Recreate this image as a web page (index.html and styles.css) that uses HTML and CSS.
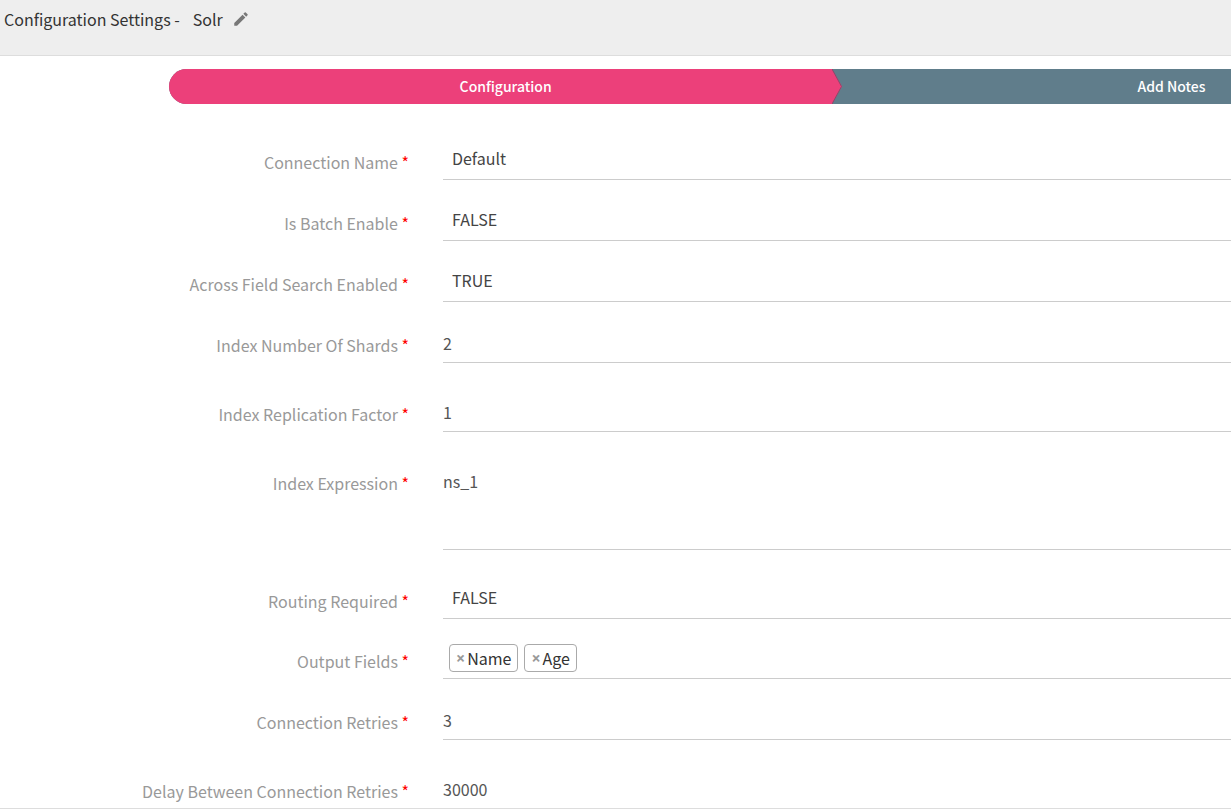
FILE: index.html
```html
<!DOCTYPE html>
<html lang="en">
<head>
<meta charset="utf-8">
<meta name="viewport" content="width=device-width, initial-scale=1">
<title>Configuration Settings - Solr</title>
<link rel="stylesheet" href="styles.css">
</head>
<body>
<header class="page-header">
  <h1 class="page-title">Configuration Settings -</h1>
  <span class="page-name">Solr</span>
  <button class="edit-button" type="button" aria-label="Edit name">
    <svg width="18" height="18" viewBox="0 0 24 24" fill="currentColor"><path d="M3 17.25V21h3.75L17.81 9.94l-3.75-3.75L3 17.25zM20.71 7.04a1 1 0 0 0 0-1.41l-2.34-2.34a1 1 0 0 0-1.41 0l-1.83 1.83 3.75 3.75 1.83-1.83z"/></svg>
  </button>
</header>
<main class="content">
  <nav class="steps" aria-label="Steps">
    <a class="step step-active" href="#configuration">Configuration
      <svg class="step-arrow" width="10" height="35" viewBox="0 0 10 35"><path d="M0 0L10 17.500L0 35H10V0z" fill="#607d8b"/><path d="M0 0L9.500 17.500L0 35" fill="none" stroke="#8a4a6b"/></svg>
    </a>
    <a class="step step-next" href="#notes">Add Notes</a>
  </nav>
  <form class="form" id="configuration">
    <div class="row">
      <label class="label" for="connection">Connection Name <span class="required">*</span></label>
      <select class="field select" id="connection"><option>Default</option></select>
    </div>
    <div class="row">
      <label class="label" for="batch">Is Batch Enable <span class="required">*</span></label>
      <select class="field select" id="batch"><option>FALSE</option><option>TRUE</option></select>
    </div>
    <div class="row">
      <label class="label" for="across">Across Field Search Enabled <span class="required">*</span></label>
      <select class="field select" id="across"><option>TRUE</option><option>FALSE</option></select>
    </div>
    <div class="row">
      <label class="label" for="shards">Index Number Of Shards <span class="required">*</span></label>
      <input class="field input" id="shards" type="text" value="2">
    </div>
    <div class="row row-spaced">
      <label class="label" for="replication">Index Replication Factor <span class="required">*</span></label>
      <input class="field input" id="replication" type="text" value="1">
    </div>
    <div class="row row-spaced">
      <label class="label" for="expression">Index Expression <span class="required">*</span></label>
      <textarea class="field textarea" id="expression">ns_1</textarea>
    </div>
    <div class="row row-spaced">
      <label class="label" for="routing">Routing Required <span class="required">*</span></label>
      <select class="field select" id="routing"><option>FALSE</option><option>TRUE</option></select>
    </div>
    <div class="row row-tight">
      <span class="label" id="output-label">Output Fields <span class="required">*</span></span>
      <div class="field tags" role="group" aria-labelledby="output-label">
        <span class="tag"><button class="tag-remove" type="button" aria-label="Remove Name">×</button>Name</span>
        <span class="tag"><button class="tag-remove" type="button" aria-label="Remove Age">×</button>Age</span>
      </div>
    </div>
    <div class="row">
      <label class="label" for="retries">Connection Retries <span class="required">*</span></label>
      <input class="field input" id="retries" type="text" value="3">
    </div>
    <div class="row row-spaced">
      <label class="label" for="delay">Delay Between Connection Retries <span class="required">*</span></label>
      <input class="field input" id="delay" type="text" value="30000">
    </div>
  </form>
</main>
<footer class="page-footer"></footer>
</body>
</html>
```
FILE: styles.css
```css
* {
  box-sizing: border-box;
}

body {
  display: flex;
  flex-direction: column;
  height: 100vh;
  margin: 0;
  background: #fff;
  color: #444;
  font: 16px/24px "Noto Sans CJK SC", "Open Sans", sans-serif;
}

.page-header {
  display: flex;
  flex: none;
  align-items: flex-start;
  padding: 7px 4px 24px;
  border-bottom: 1px solid #ddd;
  background: #eee;
  color: #333;
}

.page-title {
  margin: 0 13px 0 0;
  font-size: 16px;
  font-weight: 400;
}

.edit-button {
  display: flex;
  margin: 3px 0 0 9px;
  padding: 0;
  border: 0;
  background: none;
  color: #777;
}

.content {
  flex: 1;
  min-height: 0;
  overflow: hidden;
}

.steps {
  display: flex;
  margin: 13px 0 40px 169px;
  border-radius: 18px 0 0 18px;
  background: #607d8b;
  overflow: hidden;
}

.step {
  position: relative;
  color: #fff;
  font-size: 14px;
  font-weight: 500;
  line-height: 35px;
  text-align: center;
  text-decoration: none;
}

.step-active {
  flex: 0 0 63.4%;
  background: #ec407a;
}

.step-next {
  flex: 0 0 62%;
}

.step-arrow {
  position: absolute;
  top: 0;
  right: 0;
}

.form {
  display: flex;
  flex-direction: column;
}

.row {
  display: grid;
  grid-template-columns: 409px minmax(0, 1fr);
  column-gap: 34px;
  align-items: start;
  margin-bottom: 25px;
}

.row:has(+ .row-spaced) {
  margin-bottom: 33px;
}

.row:has(+ .row-tight) {
  margin-bottom: 24px;
}

.label {
  padding-top: 6px;
  color: #999;
  text-align: right;
}

.required {
  color: #f00;
}

.field {
  width: 100%;
  height: 36px;
  margin: 0;
  border: 0;
  border-bottom: 1px solid #ccc;
  border-radius: 0;
  background: none;
  color: #555;
  font: inherit;
  outline: 0;
}

.select {
  padding: 0 9px 7px;
  color: #444;
  appearance: none;
}

.input {
  padding: 0 0 4px;
}

.textarea {
  display: block;
  height: 85px;
  padding: 4px 0;
  resize: none;
}

.tags {
  display: flex;
  gap: 6px;
  align-items: flex-start;
  padding: 1px 6px;
}

.tag {
  display: flex;
  height: 28px;
  align-items: center;
  padding: 0 6px;
  border: 1px solid #aaa;
  border-radius: 4px;
  color: #333;
}

.tag-remove {
  margin: 0 2px 0 0;
  padding: 0;
  border: 0;
  background: none;
  color: #999;
  font: 700 16px/24px "Open Sans", sans-serif;
}

.page-footer {
  flex: none;
  height: 2px;
  border-top: 1px solid #ddd;
}
```
